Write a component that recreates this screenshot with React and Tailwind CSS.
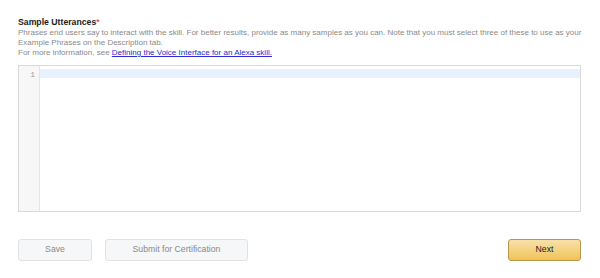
import React from "react";

export default function App() {
    return (
        <div className="w-[600px] h-[278px] bg-white px-[18px] pt-[17px] font-['Liberation_Sans',Arial,sans-serif]">
            {/* header */}
            <div className="text-[8.7px] leading-[11px] font-bold text-[#222]">
                Sample Utterances<span className="text-[#e02020] font-normal">*</span>
            </div>
            <p className="text-[8px] leading-[10px] text-[#8a8a8a] w-[566px]">
                Phrases end users say to interact with the skill. For better results, provide as many samples as you can. Note that you must select three of these to use as your Example Phrases on the Description tab.
                <br />
                For more information, see{" "}
                <a href="#" className="text-[#2b2bd8] underline">
                    Defining the Voice Interface for an Alexa skill.
                </a>
            </p>

            {/* editor */}
            <div className="mt-[7px] flex h-[147px] w-[563px] border border-[#d9d9d9] bg-white">
                <div className="w-[21px] shrink-0 border-r border-[#e4e4e4] bg-[#f7f7f7] pt-[4px] pr-[4px] text-right font-['Liberation_Mono',monospace] text-[8px] leading-[9px] text-[#999]">
                    1
                </div>
                <div className="flex-1 pt-[3px]">
                    <div className="h-[9px] bg-[#e8f2fe]"></div>
                </div>
            </div>

            {/* buttons */}
            <div className="mt-[27px] flex items-center">
                <button className="h-[22px] w-[74px] rounded-[3px] border border-[#e2e2e2] bg-[#f6f7f8] text-[8.7px] text-[#8a8a8a]">
                    Save
                </button>
                <button className="ml-[13px] h-[22px] w-[143px] rounded-[3px] border border-[#e2e2e2] bg-[#f6f7f8] text-[8.7px] text-[#8a8a8a]">
                    Submit for Certification
                </button>
                <button className="ml-auto mr-[1px] h-[22px] w-[73px] rounded-[3px] border border-[#b8964a] bg-gradient-to-b from-[#f8e1a8] to-[#efc354] text-[8.7px] text-[#222]">
                    Next
                </button>
            </div>
        </div>
    );
}
